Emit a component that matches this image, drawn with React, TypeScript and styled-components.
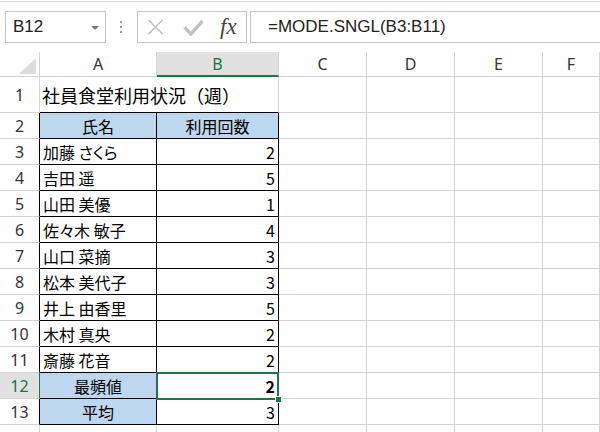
import React from "react";
import styled, { createGlobalStyle } from "styled-components";

const Global = createGlobalStyle`
  html, body { margin: 0; padding: 0; background: #fff; overflow: hidden; }
  #root { width: 600px; height: 432px; }
`;

const GRID = "#d4d4d4";
const BLACK = "#000";
const GREEN = "#217346";
const FILL = "#bdd7ee";

const Page = styled.div`
  width: 600px;
  height: 432px;
  overflow: hidden;
  background: #fff;
  display: flex;
  flex-direction: column;
`;

const Toolbar = styled.div`
  margin-top: 1px;
  border-top: 1px solid #dadada;
  height: 51px;
  box-sizing: border-box;
  display: flex;
  align-items: flex-start;
  padding: 9px 0 0 5px;
  flex-shrink: 0;
`;

const NameBox = styled.div`
  box-sizing: border-box;
  width: 101px;
  height: 32px;
  border: 1px solid #c6c6c6;
  display: flex;
  align-items: center;
  justify-content: space-between;
  padding: 0 6px 0 7px;
  font-family: "Liberation Sans", Arial, sans-serif;
  font-size: 17px;
  color: #222;
`;

const Arrow = styled.span`
  width: 0;
  height: 0;
  border-left: 4px solid transparent;
  border-right: 4px solid transparent;
  border-top: 4px solid #7a7a7a;
  margin-top: 1px;
`;

const Grip = styled.div`
  margin: 10px 0 0 14px;
  width: 2px;
  display: flex;
  flex-direction: column;
  gap: 3px;
`;

const GripDot = styled.span`
  width: 2px;
  height: 2px;
  background: #9a9a9a;
`;

const FxBox = styled.div`
  box-sizing: border-box;
  margin-left: 15px;
  width: 110px;
  height: 32px;
  border: 1px solid #c6c6c6;
  display: flex;
  align-items: center;
  padding-left: 9px;
`;

const FxText = styled.span`
  margin-left: 16px;
  font-family: "Liberation Serif", "DejaVu Serif", serif;
  font-style: italic;
  font-size: 23px;
  color: #444;
  line-height: 1;
  margin-top: -2px;
`;

const FormulaBox = styled.div`
  box-sizing: border-box;
  margin-left: 3px;
  flex: 1;
  height: 32px;
  border: 1px solid #c6c6c6;
  border-right: none;
  display: flex;
  align-items: center;
  padding-left: 17px;
  font-family: "Liberation Sans", Arial, sans-serif;
  font-size: 17px;
  color: #222;
`;

const Sheet = styled.div`
  display: grid;
  grid-template-columns: 40px 117px 122px 88px 88px 88px 1fr;
  grid-template-rows: 25px 36px repeat(13, 26px);
`;

const Corner = styled.div`
  box-sizing: border-box;
  border-right: 1px solid ${GRID};
  border-bottom: 1px solid ${GRID};
  display: flex;
  align-items: flex-end;
  justify-content: flex-end;
  padding: 0 3px 2px 0;
`;

const Triangle = styled.span`
  width: 0;
  height: 0;
  border-left: 17px solid transparent;
  border-bottom: 16px solid #dcdcdc;
`;

const ColHeader = styled.div<{ $active?: boolean }>`
  box-sizing: border-box;
  display: flex;
  align-items: center;
  justify-content: center;
  background: ${(p) => (p.$active ? "#e1e1e1" : "#fff")};
  border-right: 1px solid ${GRID};
  border-bottom: ${(p) => (p.$active ? `2px solid ${GREEN}` : `1px solid ${GRID}`)};
  padding-top: ${(p) => (p.$active ? "1px" : "0")};
  font-family: "Noto Sans", "Open Sans", sans-serif;
  font-size: 16px;
  color: ${(p) => (p.$active ? GREEN : "#333")};
`;

const RowHeader = styled.div<{ $active?: boolean; $edge?: string }>`
  box-sizing: border-box;
  display: flex;
  align-items: center;
  justify-content: center;
  background: ${(p) => (p.$active ? "#e1e1e1" : "#fff")};
  border-right: 1px solid ${(p) => (p.$active ? GREEN : p.$edge ?? GRID)};
  border-bottom: 1px solid ${GRID};
  font-family: "Noto Sans", "Open Sans", sans-serif;
  font-size: 16px;
  color: ${(p) => (p.$active ? GREEN : "#333")};
`;

type Align = "left" | "center" | "right";

const Cell = styled.div<{
  $align?: Align;
  $fill?: string;
  $r?: string;
  $b?: string;
  $bold?: boolean;
  $span?: number;
}>`
  box-sizing: border-box;
  position: relative;
  display: flex;
  align-items: center;
  justify-content: ${(p) =>
    p.$align === "right" ? "flex-end" : p.$align === "center" ? "center" : "flex-start"};
  grid-column: ${(p) => (p.$span ? `span ${p.$span}` : "auto")};
  padding: 1px 3px 0 3px;
  background: ${(p) => p.$fill ?? "#fff"};
  border-right: 1px solid ${(p) => p.$r ?? GRID};
  border-bottom: 1px solid ${(p) => p.$b ?? GRID};
  font-family: "Noto Sans CJK JP", "Noto Sans", sans-serif;
  font-feature-settings: "palt";
  font-size: 16px;
  font-weight: ${(p) => (p.$bold ? 700 : 400)};
  color: #000;
  white-space: nowrap;
`;

const TitleCell = styled(Cell)`
  font-size: 18px;
  font-feature-settings: normal;
  padding-left: 2px;
`;

const Selection = styled.div`
  position: absolute;
  top: -1px;
  left: -1px;
  right: -1px;
  bottom: -2px;
  border: 2px solid ${GREEN};
  z-index: 2;
  pointer-events: none;
`;

const Handle = styled.span`
  position: absolute;
  right: -5px;
  bottom: -5px;
  width: 5px;
  height: 5px;
  background: ${GREEN};
  border: 1px solid #fff;
`;

const names: [string, number][] = [
  ["加藤 さくら", 2],
  ["吉田 遥", 5],
  ["山田 美優", 1],
  ["佐々木 敏子", 4],
  ["山口 菜摘", 3],
  ["松本 美代子", 3],
  ["井上 由香里", 5],
  ["木村 真央", 2],
  ["斎藤 花音", 2],
];

const cols = ["A", "B", "C", "D", "E", "F"];

const EmptyCells: React.FC = () => (
  <>
    <Cell />
    <Cell />
    <Cell />
    <Cell />
  </>
);

export default function App() {
  return (
    <Page>
      <Global />
      <Toolbar>
        <NameBox>
          <span>B12</span>
          <Arrow />
        </NameBox>
        <Grip>
          <GripDot />
          <GripDot />
          <GripDot />
        </Grip>
        <FxBox>
          <svg width="17" height="16" viewBox="0 0 17 16">
            <path d="M1.5 1 L15.5 15 M15.5 1 L1.5 15" stroke="#c2c2c2" strokeWidth="1.6" fill="none" />
          </svg>
          <svg width="21" height="17" viewBox="0 0 21 17" style={{ marginLeft: 19 }}>
            <path d="M1.5 8.5 L8 15 L19.5 2" stroke="#c2c2c2" strokeWidth="3.4" fill="none" />
          </svg>
          <FxText>fx</FxText>
        </FxBox>
        <FormulaBox>=MODE.SNGL(B3:B11)</FormulaBox>
      </Toolbar>
      <Sheet>
        <Corner>
          <Triangle />
        </Corner>
        {cols.map((c) => (
          <ColHeader key={c} $active={c === "B"}>
            {c}
          </ColHeader>
        ))}

        <RowHeader>1</RowHeader>
        <TitleCell $span={2} $b={BLACK}>
          社員食堂利用状況（週）
        </TitleCell>
        <EmptyCells />

        <RowHeader $edge={BLACK}>2</RowHeader>
        <Cell $align="center" $fill={FILL} $r={BLACK} $b={BLACK}>
          氏名
        </Cell>
        <Cell $align="center" $fill={FILL} $r={BLACK} $b={BLACK}>
          利用回数
        </Cell>
        <EmptyCells />

        {names.map(([n, v], i) => (
          <React.Fragment key={n}>
            <RowHeader $edge={BLACK}>{i + 3}</RowHeader>
            <Cell $r={BLACK} $b={BLACK}>
              {n}
            </Cell>
            <Cell $align="right" $r={BLACK} $b={BLACK}>
              {v}
            </Cell>
            <EmptyCells />
          </React.Fragment>
        ))}

        <RowHeader $active>12</RowHeader>
        <Cell $align="center" $fill={FILL} $r={BLACK} $b={BLACK}>
          最頻値
        </Cell>
        <Cell $align="right" $r={BLACK} $b={BLACK} $bold>
          2
          <Selection>
            <Handle />
          </Selection>
        </Cell>
        <EmptyCells />

        <RowHeader $edge={BLACK}>13</RowHeader>
        <Cell $align="center" $fill={FILL} $r={BLACK} $b={BLACK}>
          平均
        </Cell>
        <Cell $align="right" $r={BLACK} $b={BLACK}>
          3
        </Cell>
        <EmptyCells />

        <RowHeader />
        <Cell />
        <Cell />
        <EmptyCells />
      </Sheet>
    </Page>
  );
}
